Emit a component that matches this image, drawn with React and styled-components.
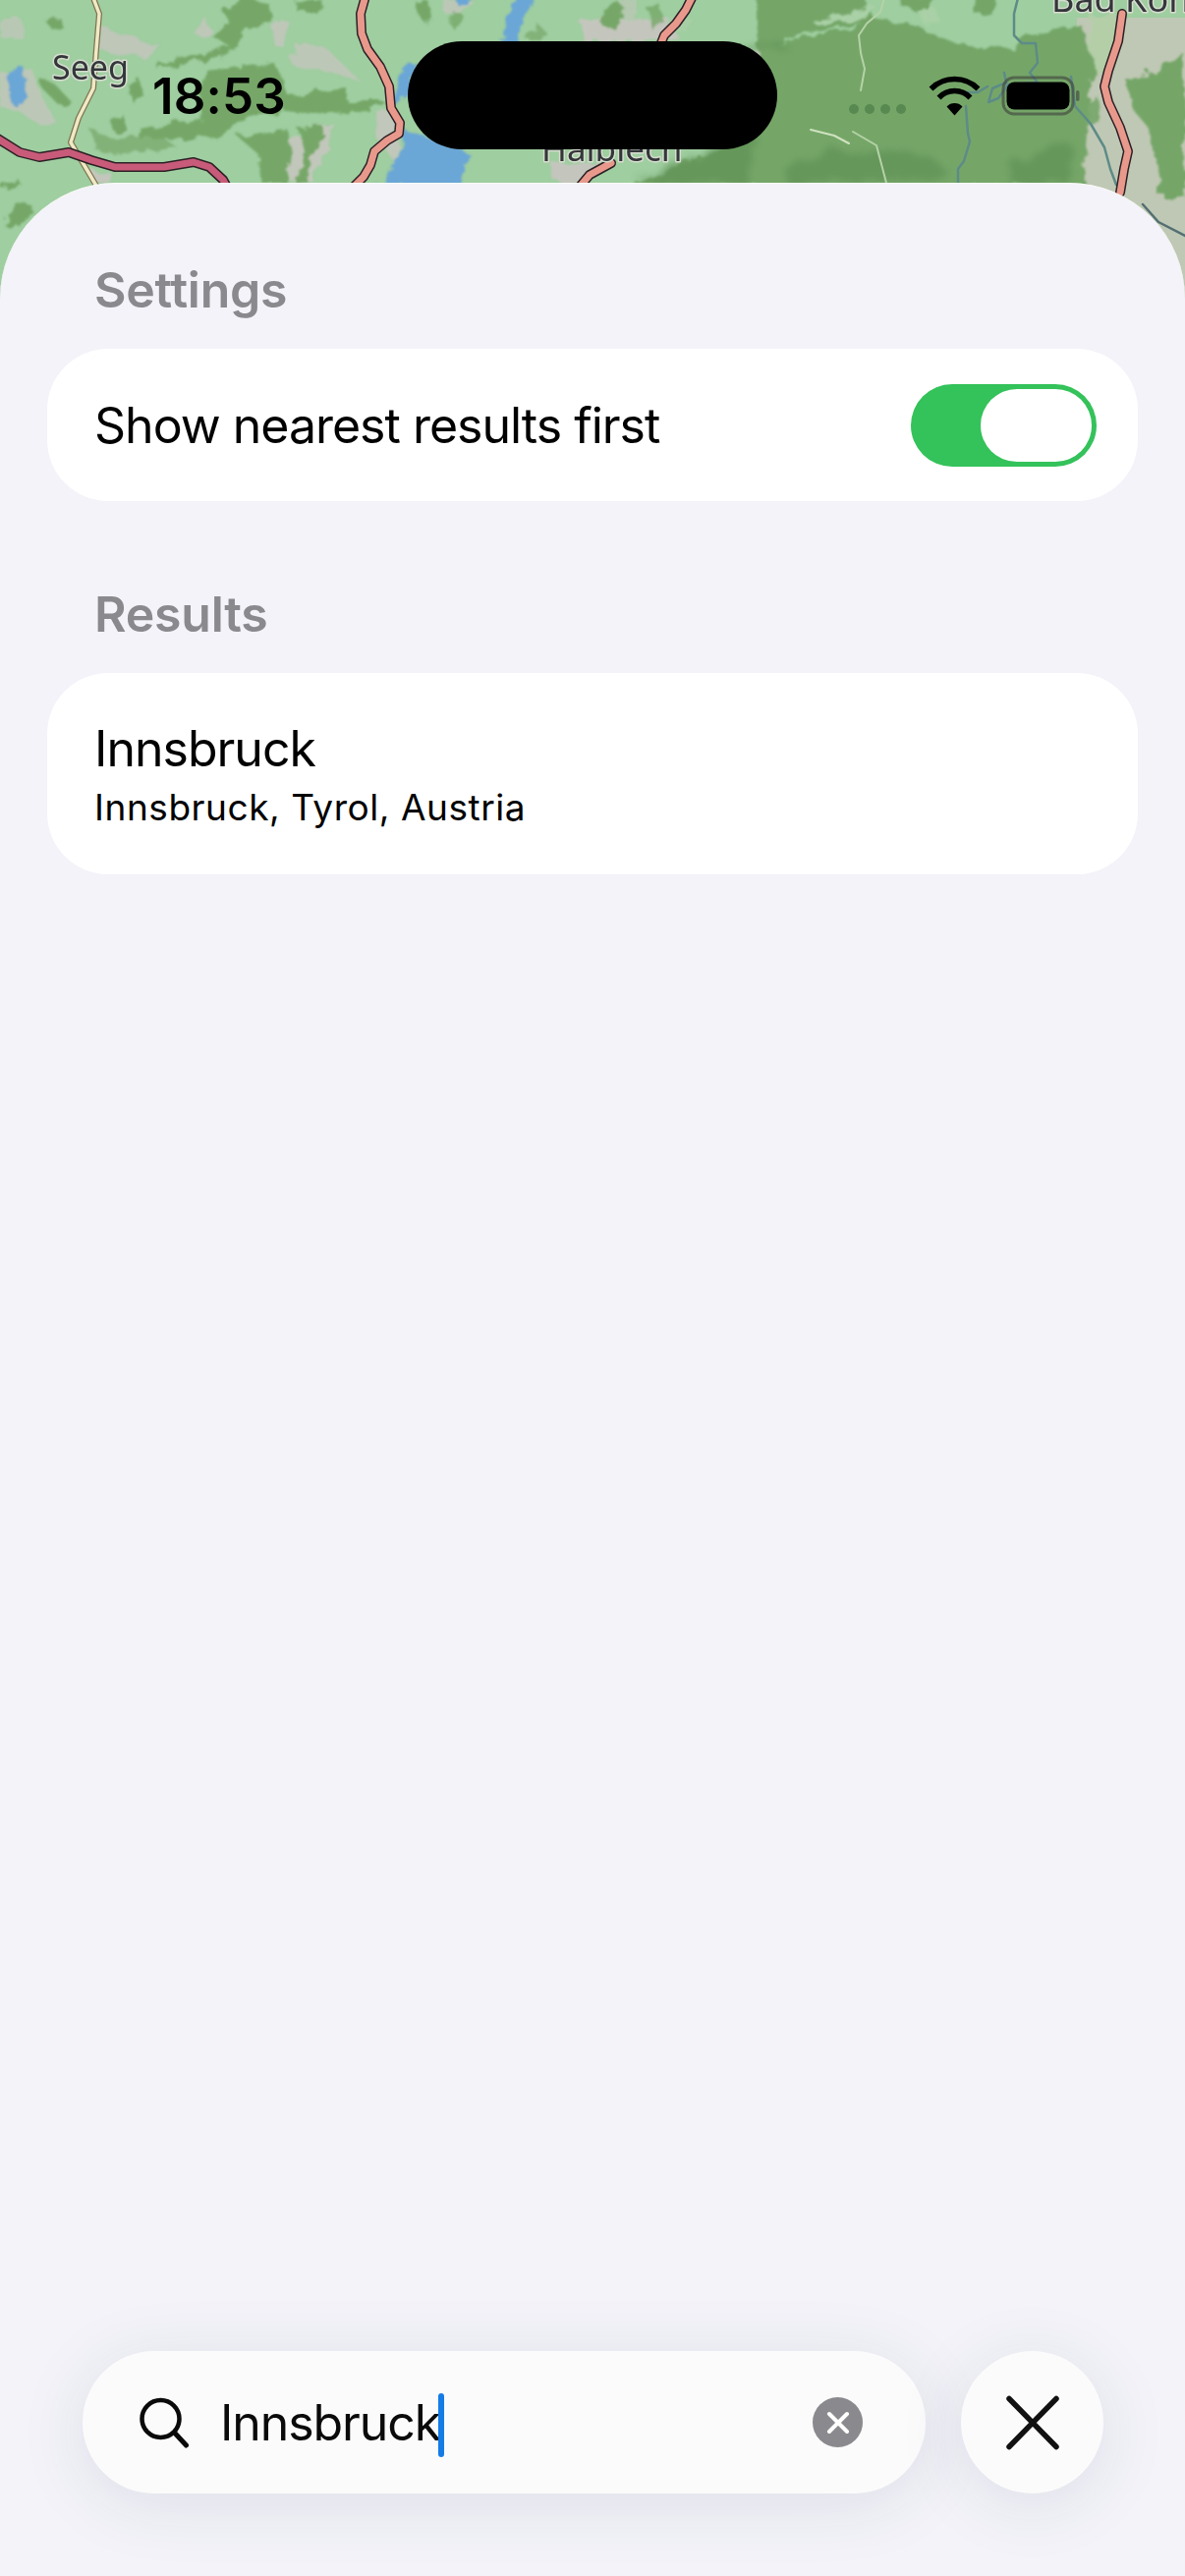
import React from "react";
import styled, { createGlobalStyle } from "styled-components";

const Global = createGlobalStyle`
  html, body { margin: 0; padding: 0; background: #f3f3f9; }
  * { box-sizing: border-box; }
`;

const FONT = `Inter, "Noto Sans", "Liberation Sans", sans-serif`;

const Page = styled.div`
  position: relative;
  width: 1206px;
  height: 2622px;
  overflow: hidden;
  font-family: ${FONT};
  color: #000;
`;

const MapLayer = styled.svg`
  position: absolute;
  top: 0;
  left: 0;
  display: block;
`;

const StatusBar = styled.div`
  position: absolute;
  top: 0;
  left: 0;
  right: 0;
  height: 186px;
`;

const Clock = styled.span`
  position: absolute;
  left: 155px;
  top: 68px;
  font-size: 51px;
  line-height: 60px;
  font-weight: 600;
  letter-spacing: 0.2px;
`;

const Island = styled.div`
  position: absolute;
  left: 415px;
  top: 42px;
  width: 376px;
  height: 110px;
  border-radius: 55px;
  background: #000;
`;

const StatusGlyphs = styled.svg`
  position: absolute;
  left: 860px;
  top: 70px;
`;

const Sheet = styled.main`
  position: relative;
  margin-top: 186px;
  height: 2436px;
  padding: 80px 48px 84px;
  display: flex;
  flex-direction: column;
  background: #f3f3f9;
  border-radius: 118px 118px 0 0;
  border-top: 1.5px solid #fbfbf8;
`;

const SectionLabel = styled.h2`
  margin: 0;
  padding-left: 48px;
  font-size: 50px;
  line-height: 56px;
  font-weight: 600;
  letter-spacing: -0.25px;
  color: #8a8a8e;
`;

const Card = styled.section`
  background: #fff;
  border-radius: 62px;
  padding: 0 42px 0 48px;
  display: flex;
  align-items: center;
  justify-content: space-between;
  height: ${(p) => p.$h}px;
  margin-top: 32px;
  margin-bottom: ${(p) => p.$mb || 0}px;
`;

const RowTitle = styled.div`
  font-size: 50px;
  line-height: 60px;
  font-weight: 400;
  letter-spacing: -1px;
`;

const RowSub = styled.div`
  font-size: 37px;
  line-height: 44px;
  margin-top: 8px;
  letter-spacing: 0.55px;
`;

const Toggle = styled.div`
  width: 189px;
  height: 84px;
  border-radius: 42px;
  background: #34c25a;
  padding: 5px;
  display: flex;
  justify-content: flex-end;
`;

const Thumb = styled.div`
  width: 113px;
  height: 74px;
  border-radius: 37px;
  background: #fff;
`;

const BottomRow = styled.div`
  margin-top: auto;
  display: flex;
  gap: 36px;
  padding: 0 36px 0 36px;
`;

const SearchField = styled.div`
  flex: none;
  width: 858px;
  height: 145px;
  border-radius: 73px;
  background: #fbfbfb;
  box-shadow: 0 10px 70px rgba(40, 40, 80, 0.1);
  display: flex;
  align-items: center;
  padding: 0 64px 0 58px;
`;

const SearchIcon = styled.svg`
  flex: none;
  margin-right: 32px;
`;

const SearchText = styled.span`
  font-size: 50px;
  line-height: 60px;
  letter-spacing: -1.1px;
  color: #0a0a0a;
`;

const Caret = styled.span`
  flex: none;
  width: 6px;
  height: 65px;
  margin-left: -2px;
  margin-top: 5px;
  border-radius: 3px;
  background: #147ce5;
`;

const Clear = styled.div`
  margin-left: auto;
  width: 51px;
  height: 51px;
  border-radius: 50%;
  background: #8a8a8e;
  display: flex;
  align-items: center;
  justify-content: center;
`;

const CloseButton = styled.div`
  flex: none;
  width: 145px;
  height: 145px;
  border-radius: 50%;
  background: #fbfbfb;
  box-shadow: 0 10px 70px rgba(40, 40, 80, 0.1);
  display: flex;
  align-items: center;
  justify-content: center;
`;

function Road({ d, fill = "#e8998c", w = 7 }) {
  return (
    <g fill="none" strokeLinecap="round" strokeLinejoin="round">
      <path d={d} stroke="#2b2025" strokeWidth={w + 3} />
      <path d={d} stroke={fill} strokeWidth={w} />
    </g>
  );
}

const PATCH = { filter: "url(#rough)" };

function MapArt() {
  return (
    <MapLayer width="1206" height="340" viewBox="0 0 1206 340">
      <defs>
        <filter id="rough" x="-5%" y="-5%" width="110%" height="110%">
          <feTurbulence type="fractalNoise" baseFrequency="0.07" numOctaves="3" seed="4" result="n" />
          <feDisplacementMap in="SourceGraphic" in2="n" scale="13" />
          <feGaussianBlur stdDeviation="0.9" />
        </filter>
        <filter id="soft" x="-10%" y="-10%" width="120%" height="120%">
          <feTurbulence type="fractalNoise" baseFrequency="0.05" numOctaves="3" seed="9" result="n" />
          <feDisplacementMap in="SourceGraphic" in2="n" scale="16" />
          <feGaussianBlur stdDeviation="3.5" />
        </filter>
      </defs>
      <rect width="1206" height="340" fill="#9fcea0" />

      {/* grey settlement and rock patches */}
      <g fill="#c4c6bd" style={PATCH}>
        <path d="M0 18h20l4 20H0z" opacity=".7" />
        <path d="M0 75l33-5 10 30 14 24-14 4-22-14-21-4z" opacity=".8" />
        <path d="M103 27l64 23-24 7-43-4z" opacity=".85" />
        <path d="M208 14l9 23h-17z" opacity=".85" />
        <path d="M277 27l16-7-3 27h-10z" opacity=".85" />
        <path d="M300 43l33 7 34 33-33-10-37-6z" opacity=".8" />
        <path d="M293 143l44-20-4 27-16 35h-24z" opacity=".95" />
        <path d="M383 113l20-3 5 63-25-33z" opacity=".9" />
        <path d="M90 173l23 3v10H97z" />
        <path d="M452 0h30l-10 12-20 2z" opacity=".8" />
        <path d="M590 20l90-2 12 22-100 4z" />
        <path d="M630 0h20l-6 18h-16z" opacity=".6" />
        <path d="M560 165h55l-20 21h-30z" />
        <path d="M765 52l28-7 10 3-34 14z" opacity=".9" />
      </g>

      {/* right hand pale valley */}
      <path d="M1096 18h110v322h-72l-10-130-30-24z" fill="#bfc8b4" />
      <path d="M1110 18l28-6-6 60-26 6z" fill="#b4cfa8" style={PATCH} />

      {/* forests, left half */}
      <g fill="#76a768" style={PATCH}>
        <path d="M227 10l26-14 24 11 3 13-27 10-15 20-21-12 13-15z" />
        <path d="M300 0h28l-6 13h-18z" />
        <path d="M160 67l27-9 53-11-7 8-46 10-27 5z" />
        <path d="M210 72l70-8 13 33 60-7v13l39 0-17 10-56 3-29-3-48 10-13 17-87 2 2-10 58-12z" />
        <path d="M240 137l53-5 4 25-4 30h-26l-4-30z" />
        <path d="M303 130l25-2v15l-12 17-3 26h-13l10-30z" />
        <path d="M48 23l12-6 8 15-15-2z" />
        <path d="M130 87l10-9 7 19-14 6z" />
        <path d="M38 78l15 5 19 20-12 4-17-17z" />
        <path d="M112 122l16-4v15l-13 0z" />
        <path d="M93 133l20 7 53 0 14 10-63 7-20-5z" opacity=".7" />
        <path d="M0 187l23-2v4l-23 2zM17 207l17 3-4 13-20 10-5-4z" />
        <path d="M423 2h14l4 16-8 6-8-12z" />
        <path d="M460 10l10 4-6 18-6-8z" opacity=".8" />
        <path d="M535 34l14-8 8 8-20 8z" opacity=".7" />
        <path d="M615 10l12-10 8 8-8 22-14-4z" />
        <path d="M660 10l12-6 4 18-14 8z" opacity=".8" />
      </g>

      {/* forests, right half */}
      <g fill="#75a668" style={PATCH}>
        <path d="M770 -4h110l10 24-46 10-30 6-34 12-10 2z" />
        <path d="M772 48l98-20 12-10 48 8 45 19 55 5 10-10 60-15 18 52-8 6-8 106H760l-122 0 110-44 22-20z" />
        <path d="M915 -4h40l-12 16-24-4z" />
        <path d="M990 -4h24l-6 18-14 2z" />
        <path d="M1148 84l58-28v130l-24 4-14-60-16-20z" />
        <path d="M1180 180h26v20h-26z" />
        <path d="M1098 108l20-8 2 14-14 18-8 0z" opacity=".9" />
      </g>
      <g fill="#a9d0a6" style={PATCH}>
        <path d="M825 20l36-5 26-10 6 4-24 11-38 5z" />
        <path d="M930 8l22 0 4 14-14 4z" />
        <path d="M680 20l22-4-4 16-16 2z" opacity=".8" />
      </g>
      <g fill="#5e9054" style={{ filter: "url(#soft)" }} opacity=".7">
        <path d="M800 172l45-18 40 4 30-8 35 12 20 18-170 8z" />
        <path d="M1030 168l54-24 8 6-8 36h-56z" />
        <path d="M650 186l90-42 30-8-8 50z" />
        <path d="M800 45l-50 3-3 4 50-2z" />
      </g>

      {/* water */}
      <g fill="#6ba6d6" style={PATCH}>
        <path d="M8 73l16-5 4 30-14 10-4-16z" />
        <path d="M527 -4h18l-14 22-4 26h-16l6-26z" />
        <path d="M463 -4h14l-2 9-10 0z" />
        <path d="M412 64l10-4-4 28-8 16-12 4 8-22z" />
        <path d="M412 132l66 24-10 34h-84l18-22z" />
      </g>

      {/* small roads and rivers */}
      <g fill="none" strokeLinejoin="round" strokeLinecap="round">
        <path d="M95 -2l6 16-3 36-3 40-15 30-8 25 26 44" stroke="#7f7450" strokeWidth="6" />
        <path d="M95 -2l6 16-3 36-3 40-15 30-8 25 26 44" stroke="#efe9c6" strokeWidth="3.5" />
        <path d="M1036 -2l-4 16 0 22 8 8 14 0 2 20-8 10 8 10-30 2-10 14-10 4 4-14 14-6-2-10M1005 88l-10 6-12 0M983 108l2 28 2 8-6 20-6 8v18M1090 78l4 30 16 18 14 24 6 22 6 16" stroke="#5d8b88" strokeWidth="2.5" />
        <path d="M1163 208l16 18 27 14" stroke="#536f72" strokeWidth="2.5" />
        <path d="M900 -2l-4 14-14 12-8 12 2 18 4 16-4 22M868 134l24 14 10 38" stroke="#b4d2a6" strokeWidth="2" />
        <path d="M825 132l24 6 15 8" stroke="#cfe2bf" strokeWidth="2" />
      </g>

      {/* main roads */}
      <Road fill="#c85b79" d="M-4 140L20 155L40 160L70 155L93 163L117 170L167 170L197 165L213 170L227 183L232 192" />
      <Road d="M372 -4L367 14L368 34L374 50L387 68L396 88L398 110L407 125L406 136L394 143L381 154L377 168L370 180L360 190" />
      <Road d="M705 -4L698 10L688 24L676 36L672 46" />
      <Road d="M622 166L600 178L590 190" />
      <Road d="M1142 14L1138 42L1128 72L1124 88L1128 104L1140 130L1148 154L1144 172L1140 196" />

      {/* place labels */}
      <g fontFamily='"Noto Sans", sans-serif' fill="#33373a" stroke="#d7dccf" strokeWidth="3" paintOrder="stroke" strokeLinejoin="round">
        <text x="53" y="81" fontSize="34">Seeg</text>
        <text x="551" y="164" fontSize="35">Halblech</text>
        <text x="1070" y="12" fontSize="36">Bad Kohlgrub</text>
      </g>
    </MapLayer>
  );
}

export default function App() {
  return (
    <Page>
      <Global />
      <MapArt />
      <StatusBar>
        <Clock>18:53</Clock>
        <Island />
        <StatusGlyphs width="250" height="60" viewBox="0 0 250 60">
          <g fill="#4f7f48" opacity=".75">
            <circle cx="9" cy="41" r="5" />
            <circle cx="25" cy="41" r="5" />
            <circle cx="41" cy="41" r="5" />
            <circle cx="57" cy="41" r="5" />
          </g>
          <g fill="none" stroke="#000" strokeWidth="5.5">
            <path d="M87.500 20.500a34 34 0 0 1 48 0" />
            <path d="M95.500 29.500a22 22 0 0 1 32 0" />
          </g>
          <path d="M103.500 38.500a11 11 0 0 1 16 0l-8 9z" fill="#000" />
          <rect x="161" y="9" width="71" height="37" rx="11" fill="none" stroke="#3d3f3c" strokeOpacity=".6" strokeWidth="3" />
          <rect x="164.500" y="13.500" width="64" height="28" rx="8" fill="#000" />
          <rect x="235" y="22" width="3.500" height="11" rx="1.700" fill="#3d3f3c" fillOpacity=".6" />
        </StatusGlyphs>
      </StatusBar>
      <Sheet>
        <SectionLabel>Settings</SectionLabel>
        <Card $h={155} $mb={87}>
          <RowTitle>Show nearest results first</RowTitle>
          <Toggle><Thumb /></Toggle>
        </Card>
        <SectionLabel>Results</SectionLabel>
        <Card $h={205}>
          <div>
            <RowTitle>Innsbruck</RowTitle>
            <RowSub>Innsbruck, Tyrol, Austria</RowSub>
          </div>
        </Card>
        <BottomRow>
          <SearchField>
            <SearchIcon width="50" height="52" viewBox="0 0 50 52">
              <circle cx="21.500" cy="22" r="19" fill="none" stroke="#0a0a0a" strokeWidth="4.500" />
              <path d="M35.500 36l12 13" stroke="#0a0a0a" strokeWidth="5" strokeLinecap="round" />
            </SearchIcon>
            <SearchText>Innsbruck</SearchText>
            <Caret />
            <Clear>
              <svg width="24" height="24" viewBox="0 0 24 24">
                <path d="M3 3l18 18M21 3L3 21" stroke="#fff" strokeWidth="4" strokeLinecap="round" />
              </svg>
            </Clear>
          </SearchField>
          <CloseButton>
            <svg width="54" height="56" viewBox="0 0 54 56">
              <path d="M3 3.500l48 49M51 3.500l-48 49" stroke="#111" strokeWidth="5.500" strokeLinecap="round" />
            </svg>
          </CloseButton>
        </BottomRow>
      </Sheet>
    </Page>
  );
}
